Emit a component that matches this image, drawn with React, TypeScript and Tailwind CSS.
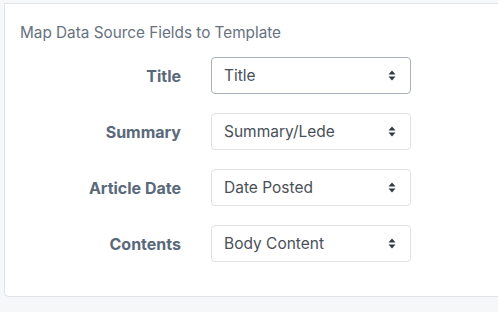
import React from "react";

const fields = [
  { label: "Title", value: "Title", focused: true },
  { label: "Summary", value: "Summary/Lede" },
  { label: "Article Date", value: "Date Posted" },
  { label: "Contents", value: "Body Content" },
];

function Arrows() {
  return (
    <svg width="8" height="11" viewBox="0 0 8 11" className="text-[#343a40]">
      <path d="M4 0.5L7.5 4.5H0.5Z" fill="currentColor" />
      <path d="M4 10.5L7.5 6.5H0.5Z" fill="currentColor" />
    </svg>
  );
}

export default function App() {
  return (
    <div
      className="min-h-screen bg-[#f6f7f8] pt-[3px] pl-[4px]"
      style={{ fontFamily: "Inter, 'Liberation Sans', Arial, sans-serif" }}
    >
      <div className="h-[294px] bg-white border-t border-l border-b border-[#e0e3e8] rounded-bl-[5px] pl-[15px] pt-[17px]">
        <h2 className="text-[15.3px] leading-6 text-[#66727f] font-normal">
          Map Data Source Fields to Template
        </h2>

        <div className="mt-[12px] grid grid-cols-[161px_200px] gap-x-[30px] gap-y-[19px] items-center">
          {fields.map((f) => (
            <React.Fragment key={f.label}>
              <label className="text-right text-[16px] font-bold text-[#59697a]">
                {f.label}
              </label>
              <div
                className={
                  "relative h-[37px] rounded-[4px] bg-white border flex items-center pl-[12px] pr-[14px] " +
                  (f.focused ? "border-[#a9b2bc]" : "border-[#dee2e6]")
                }
              >
                <span className="flex-1 text-[15.5px] text-[#4a5057]">{f.value}</span>
                <Arrows />
              </div>
            </React.Fragment>
          ))}
        </div>
      </div>
    </div>
  );
}
